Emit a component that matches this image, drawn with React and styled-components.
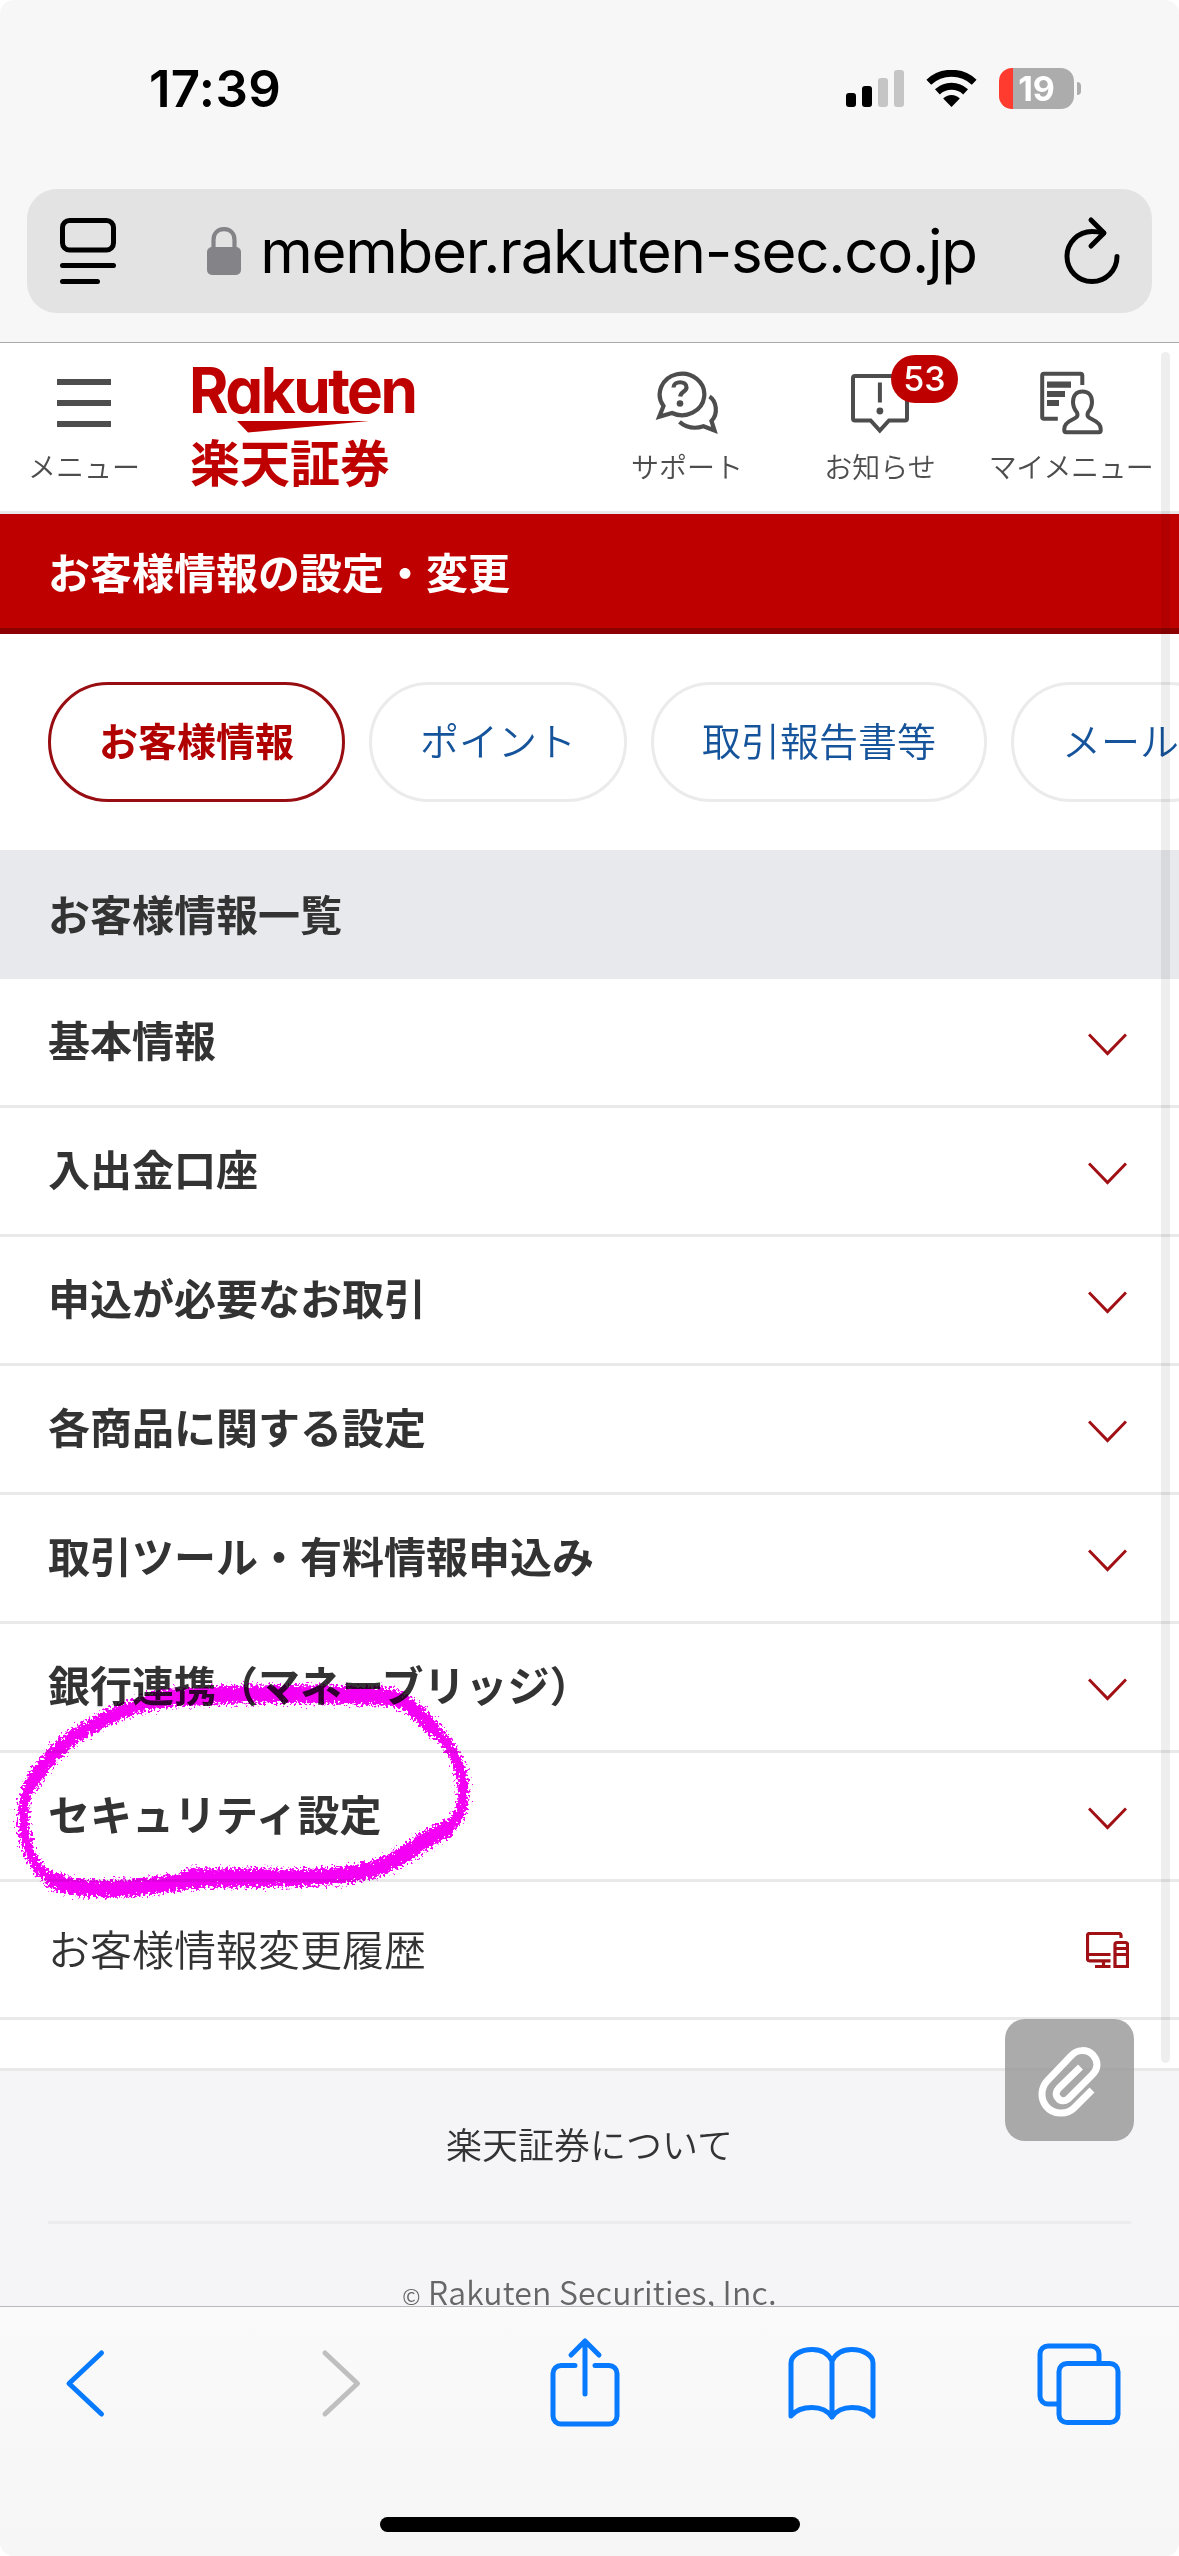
import React from "react";
import styled, { createGlobalStyle } from "styled-components";

const sections = [
    "基本情報",
    "入出金口座",
    "申込が必要なお取引",
    "各商品に関する設定",
    "取引ツール・有料情報申込み",
    "銀行連携（マネーブリッジ）",
    "セキュリティ設定",
];

const tabs = ["お客様情報", "ポイント", "取引報告書等", "メール"];

const App = () => (
    <Phone lang="ja">
        <GlobalStyle />
        <StatusBar>
            <Clock>17:39</Clock>
            <StatusIcons>
                <SignalIcon />
                <WifiIcon />
                <Battery>
                    <BatteryLevel>19</BatteryLevel>
                    <BatteryNub />
                </Battery>
            </StatusIcons>
        </StatusBar>
        <AddressArea>
            <AddressBar>
                <ReaderIcon />
                <Address>
                    <LockIcon />
                    <Url>member.rakuten-sec.co.jp</Url>
                </Address>
                <ReloadIcon />
            </AddressBar>
        </AddressArea>

        <WebView>
            <Header>
                <HeaderItem $width={112}>
                    <MenuIcon />
                    <HeaderLabel>メニュー</HeaderLabel>
                </HeaderItem>
                <Logo>
                    <LogoName>Rakuten</LogoName>
                    <LogoSwoosh viewBox="0 0 132 12">
                        <path d="M0 0H132L11 11.5Z" fill="#bf0000" />
                    </LogoSwoosh>
                    <LogoCompany>楽天証券</LogoCompany>
                </Logo>
                <HeaderActions>
                    <HeaderItem $width={112}>
                        <SupportIcon />
                        <HeaderLabel>サポート</HeaderLabel>
                    </HeaderItem>
                    <HeaderItem $width={112} $before={81}>
                        <NoticeIcon />
                        <Badge>53</Badge>
                        <HeaderLabel>お知らせ</HeaderLabel>
                    </HeaderItem>
                    <HeaderItem $width={168} $before={51}>
                        <MyMenuIcon />
                        <HeaderLabel $tight>マイメニュー</HeaderLabel>
                    </HeaderItem>
                </HeaderActions>
            </Header>

            <PageTitle>お客様情報の設定・変更</PageTitle>

            <Tabs>
                {tabs.map((tab, index) => (
                    <Tab key={tab} $active={index === 0}>
                        {tab}
                    </Tab>
                ))}
            </Tabs>

            <SectionTitle>お客様情報一覧</SectionTitle>
            <List>
                {sections.map(section => (
                    <Row key={section}>
                        <RowLabel>{section}</RowLabel>
                        <ChevronDown />
                    </Row>
                ))}
                <HistoryRow>
                    <RowLabel>お客様情報変更履歴</RowLabel>
                    <DevicesIcon />
                </HistoryRow>
                <Marker />
            </List>

            <Footer>
                <FooterLink>楽天証券について</FooterLink>
                <Copyright>
                    <small>©</small> Rakuten Securities, Inc.
                </Copyright>
            </Footer>

            <AttachButton>
                <ClipIcon />
            </AttachButton>
            <Scrollbar />
        </WebView>

        <Toolbar>
            <ToolbarIcons>
                <ToolIcon>
                    <path d="M54.5 15L22 45.500L54.500 76" />
                </ToolIcon>
                <ToolIcon $disabled>
                    <path d="M31 15L63.500 45.500L31 76" />
                </ToolIcon>
                <ToolIcon>
                    <path d="M34 27.500H20a8 8 0 0 0-8 8V78a8 8 0 0 0 8 8H68a8 8 0 0 0 8-8V35.500a8 8 0 0 0-8-8H54" />
                    <path d="M44 56V4M30 17L44 3L58 17" />
                </ToolIcon>
                <ToolIcon>
                    <path d="M44 23C40 15 33 11.500 24.500 11.500C13 11.500 3 17 3 25V78C7 73 14 69.500 24 69.500C33 69.500 40 73 44 79C48 73 55 69.500 64 69.500C74 69.500 81 73 85 78V25C85 17 75 11.500 63.500 11.500C55 11.500 48 15 44 23ZM44 23V79" />
                </ToolIcon>
                <ToolIcon>
                    <path d="M64 24V16a8 8 0 0 0-8-8H13a8 8 0 0 0-8 8V58a8 8 0 0 0 8 8h9" />
                    <rect x="24" y="25.500" width="59" height="59" rx="8" />
                </ToolIcon>
            </ToolbarIcons>
            <HomeIndicator />
        </Toolbar>
    </Phone>
);

const SignalIcon = () => (
    <svg width="58" height="37" viewBox="0 0 58 37">
        <rect x="0" y="23" width="10" height="14" rx="3" />
        <rect x="16" y="16" width="10" height="21" rx="3" />
        <rect x="32" y="8" width="10" height="29" rx="3" fill="#c5c5c5" />
        <rect x="48" y="0" width="10" height="37" rx="3" fill="#c5c5c5" />
    </svg>
);

const WifiIcon = () => (
    <svg width="51" height="37" viewBox="0 0 51 37" fill="none" stroke="#000" strokeWidth="7">
        <path d="M2.800 12.200A33.300 33.300 0 0 1 48.200 12.200" />
        <path d="M11.400 21.900A20.500 20.500 0 0 1 39.600 21.900" />
        <path d="M25.500 37L17.200 28.500A11.500 11.500 0 0 1 33.800 28.500Z" fill="#000" stroke="none" />
    </svg>
);

const ReaderIcon = () => (
    <svg width="56" height="67" viewBox="0 0 56 67" fill="none" stroke="#000" strokeWidth="5">
        <rect x="2.500" y="2.500" width="51" height="29.500" rx="7" />
        <path d="M2.500 47.500H53.500M2.500 63.500H37.500" strokeLinecap="round" />
    </svg>
);

const LockIcon = () => (
    <svg width="34" height="49" viewBox="0 0 34 49">
        <rect x="0" y="20" width="34" height="28" rx="5" fill="#838388" />
        <path d="M6.500 22V13C6.500 6 11 2.200 17 2.200S27.500 6 27.500 13V22" fill="none" stroke="#838388" strokeWidth="4.200" />
    </svg>
);

const ReloadIcon = () => (
    <svg width="60" height="72" viewBox="0 0 60 72" fill="none" stroke="#000" strokeWidth="5" strokeLinecap="round" strokeLinejoin="round">
        <path d="M56 41.500A25 25 0 1 1 31 16.500Q37 16.500 42.500 18" />
        <path d="M30 5L43 18L30 31" />
    </svg>
);

const MenuIcon = () => (
    <svg width="54" height="64" viewBox="0 0 54 64" fill="#4d4d4d">
        <path d="M0 8H54V14H0ZM0 29H54V35H0ZM0 50H54V56H0Z" />
    </svg>
);

const SupportIcon = () => (
    <svg width="65" height="64" viewBox="0 0 65 64" fill="none" stroke="#4d4d4d" strokeWidth="4.200">
        <path d="M8.500 35A22.300 20.800 0 1 1 17 42L4.200 45.800Z" />
        <path d="M54.500 25.500C61.500 30 63.500 43 56.500 50L59.500 59.500L48.500 55.300C40 58 31 56.500 24.500 50.800" />
        <path d="M18.500 16.500C18.800 9.500 31.500 9.500 31.500 16.500C31.500 21 25.800 20 25.200 25.500" />
        <circle cx="25" cy="32.500" r="3.300" fill="#4d4d4d" stroke="none" />
    </svg>
);

const NoticeIcon = () => (
    <svg width="58" height="64" viewBox="0 0 58 64" fill="none" stroke="#4d4d4d" strokeWidth="4">
        <path d="M4 5H54Q56 5 56 7V47.500Q56 49.500 54 49.500H38L28.800 59.500L19.600 49.500H4Q2 49.500 2 47.500V7Q2 5 4 5Z" />
        <path d="M28.900 11.500V31.500" />
        <circle cx="28.900" cy="40" r="3.400" fill="#4d4d4d" stroke="none" />
    </svg>
);

const MyMenuIcon = () => (
    <svg width="65" height="64" viewBox="0 0 65 64" fill="none" stroke="#4d4d4d" strokeWidth="4">
        <path d="M43.300 14V4.500Q43.300 2.700 41.500 2.700H5Q3.200 2.700 3.200 4.500V46Q3.200 47.800 5 47.800H18.800" />
        <path d="M8 13.700H32M8 23H26M8 32H20" strokeWidth="6.200" />
        <path d="M43.500 20.600C37 20.600 34 25 34 31C34 35.500 35.500 38.500 38 41.500C39.500 45.500 37.500 46.700 33.500 48.500C27.500 51.300 25.300 54 25.300 58V59.500Q25.300 61.200 27 61.200H60Q61.700 61.200 61.700 59.500V58C61.700 54 59.500 51.300 53.500 48.500C49.500 46.700 47.500 45.500 49 41.500C51.500 38.500 53 35.500 53 31C53 25 50 20.600 43.500 20.600Z" />
    </svg>
);

const ChevronDown = () => (
    <svg width="39" height="23" viewBox="0 0 39 23" fill="none" stroke="#a01014" strokeWidth="3">
        <path d="M1 1.500L19.500 20.500L38 1.500" />
    </svg>
);

const DevicesIcon = () => (
    <svg width="43" height="37" viewBox="0 0 43 37" fill="none" stroke="#a01014" strokeWidth="3.200">
        <path d="M35 6V3.500Q35 1.500 33 1.500H3.500Q1.500 1.500 1.500 3.500V27Q1.500 28.800 3.500 28.800H24.500M1.500 22.500H24.500M17.500 29V34M9 34.500H24.500" />
        <path d="M29 34.500V12.500Q29 10.500 31 10.500H39.500Q41.500 10.500 41.500 12.500V34.500ZM29 16.500H41.500M29 22.500H41.500" />
    </svg>
);

const ClipIcon = () => (
    <svg width="70" height="76" viewBox="0 0 70 76" fill="none" stroke="#fff" strokeWidth="7">
        <path d="M57 46L39 64C32 71 18 71 11 62C5 54 6 44 12 37L36 12C42 5 52 5 58 11C64 18 63 25 57 31L33 55C29 58 25 57 23 54C20 51 21 47 24 44L45.500 23" />
    </svg>
);

// Crayon loop drawn over the security row
const Marker = () => (
    <MarkerSvg viewBox="0 0 480 240">
        <filter id="crayon" x="-5%" y="-10%" width="110%" height="120%">
            <feTurbulence type="fractalNoise" baseFrequency="0.4" numOctaves="3" seed="4" result="noise" />
            <feDisplacementMap in="SourceGraphic" in2="noise" scale="15" xChannelSelector="R" yChannelSelector="G" />
        </filter>
        <g filter="url(#crayon)" fill="none" stroke="#f400f4" strokeLinecap="round" strokeLinejoin="round">
            <path
                strokeWidth="11"
                d="M25 122C36 98 60 70 93 53C122 36 150 28 185 26C250 22 320 22 380 25C404 28 419 42 435 60C456 82 463 100 462 125C461 149 450 155 430 166C410 176 395 195 365 200C330 208 280 207 230 207C190 206 150 218 120 217C85 219 55 217 38 198C25 182 18 150 25 122Z"
            />
            <path strokeWidth="15" d="M30 113C50 80 75 62 93 54C122 37 150 28 185 26C250 22 320 22 390 26C405 30 419 42 432 58" />
            <path strokeWidth="18" d="M150 30C165 27 175 26 185 26C250 22 320 22 390 26" />
            <path strokeWidth="17" d="M445 158C415 172 395 195 365 200C330 208 280 207 230 207C190 206 150 218 120 217C95 219 70 218 52 209" />
            <path strokeWidth="19" d="M188 207C210 206 240 208 268 206" />
        </g>
    </MarkerSvg>
);

const GlobalStyle = createGlobalStyle`
  * {
    box-sizing: border-box;
  }

  body {
    margin: 0;
    background: #fff;
  }

  svg {
    display: block;
    flex: none;
  }
`;

const Phone = styled.div`
  display: flex;
  flex-direction: column;
  width: 1179px;
  height: 2556px;
  overflow: hidden;
  border-radius: 14px;
  background: #f7f7f7;
  color: #333;
  font-family: "Noto Sans CJK JP", sans-serif;
`;

const StatusBar = styled.div`
  display: flex;
  justify-content: space-between;
  align-items: center;
  height: 176px;
  padding: 0 98px 0 149px;
  color: #000;
  font-family: Inter, sans-serif;
`;

const Clock = styled.div`
  font-size: 51px;
  font-weight: 600;
  letter-spacing: 0.3px;
`;

const StatusIcons = styled.div`
  display: flex;
  align-items: center;
  gap: 22px;
`;

const Battery = styled.div`
  display: flex;
  align-items: center;
`;

const BatteryLevel = styled.div`
  width: 75px;
  height: 41px;
  border-radius: 13px;
  background: linear-gradient(90deg, #ff3b30 14px, #acacac 14px);
  color: #fff;
  font-size: 34px;
  font-weight: 700;
  line-height: 41px;
  text-align: center;
`;

const BatteryNub = styled.div`
  width: 4px;
  height: 13px;
  margin-left: 3px;
  border-radius: 0 6px 6px 0;
  background: #acacac;
`;

const AddressArea = styled.div`
  height: 167px;
  padding: 13px 27px 0;
  border-bottom: 1px solid #a9a9ab;
`;

const AddressBar = styled.div`
  display: flex;
  align-items: center;
  justify-content: space-between;
  height: 124px;
  padding: 0 31px 0 33px;
  border-radius: 30px;
  background: #e3e3e3;
`;

const Address = styled.div`
  display: flex;
  align-items: center;
  gap: 19px;
  margin-left: 7px;
`;

const Url = styled.div`
  color: #000;
  font-family: Inter, sans-serif;
  font-size: 60px;
  line-height: 72px;
  letter-spacing: -1.25px;
`;

const WebView = styled.main`
  position: relative;
  flex: 1;
  overflow: hidden;
  background: #fff;
`;

const Header = styled.header`
  display: flex;
  height: 171px;
  padding: 0 24px 0 28px;
  border-bottom: 3px solid #e9e9e9;
`;

const HeaderItem = styled.div`
  position: relative;
  display: flex;
  flex-direction: column;
  align-items: center;
  width: ${props => props.$width}px;
  margin-left: ${props => props.$before || 0}px;
  padding-top: 28px;
`;

const HeaderLabel = styled.span`
  margin-top: 11px;
  color: #4d4d4d;
  font-size: 28px;
  font-weight: 350;
  line-height: 40px;
  letter-spacing: ${props => (props.$tight ? -0.6 : 0)}px;
  white-space: nowrap;
`;

const HeaderActions = styled.div`
  display: flex;
  margin-left: auto;
`;

const Badge = styled.span`
  position: absolute;
  top: 12px;
  left: 67px;
  width: 67px;
  height: 48px;
  border-radius: 24px;
  background: #bf0000;
  color: #fff;
  font-family: Inter, sans-serif;
  font-size: 34px;
  font-weight: 500;
  line-height: 48px;
  text-align: center;
`;

const Logo = styled.div`
  margin-left: 50px;
  padding-top: 18px;
  color: #bf0000;
`;

const LogoName = styled.div`
  margin-left: -1px;
  font-family: Inter, sans-serif;
  font-size: 63px;
  font-weight: 700;
  line-height: 58px;
  letter-spacing: -2.6px;
  font-feature-settings: "cv11";
  transform: scaleX(0.955);
  transform-origin: left;
`;

const LogoSwoosh = styled.svg`
  width: 132px;
  height: 12px;
  margin: 2px 0 0 47px;
`;

const LogoCompany = styled.div`
  font-size: 50px;
  font-weight: 700;
  line-height: 54px;
`;

const PageTitle = styled.h1`
  height: 120px;
  margin: 0;
  padding-left: 48px;
  border-bottom: 6px solid #8c0000;
  background: #bf0000;
  color: #fff;
  font-size: 42px;
  font-weight: 700;
  line-height: 113px;
`;

const Tabs = styled.nav`
  display: flex;
  gap: 24px;
  height: 216px;
  padding: 48px;
`;

const Tab = styled.a`
  flex: none;
  height: 120px;
  padding: 0 48px;
  border: 3px solid ${props => (props.$active ? "#980d12" : "#ebebeb")};
  border-radius: 60px;
  color: ${props => (props.$active ? "#b00000" : "#15539b")};
  font-size: 39px;
  font-weight: ${props => (props.$active ? 700 : 350)};
  line-height: 109px;
`;

const SectionTitle = styled.h2`
  height: 129px;
  margin: 0;
  padding-left: 48px;
  background: #e8e9ed;
  font-size: 42px;
  font-weight: 700;
  line-height: 126px;
`;

const List = styled.div`
  position: relative;
  padding-bottom: 48px;
`;

const Row = styled.div`
  display: flex;
  align-items: center;
  justify-content: space-between;
  height: 129px;
  padding: 4px 52px 0 48px;
  border-bottom: 3px solid #e9e9e9;
  font-size: 42px;
  font-weight: 700;
  line-height: 60px;
`;

const RowLabel = styled.span`
  margin-bottom: 10px;
`;

const HistoryRow = styled(Row)`
  height: 138px;
  padding: 1px 50px 0 48px;
  font-weight: 350;

  ${RowLabel} {
    margin-bottom: 5px;
  }
`;

const MarkerSvg = styled.svg`
  position: absolute;
  left: 1px;
  top: 692px;
  width: 480px;
  height: 240px;
  mix-blend-mode: multiply;
`;

const Footer = styled.footer`
  height: 300px;
  padding: 0 48px;
  border-top: 3px solid #e9e9e9;
  background: #f5f5f8;
  text-align: center;
`;

const FooterLink = styled.div`
  height: 153px;
  border-bottom: 3px solid #ececee;
  font-size: 36px;
  font-weight: 350;
  line-height: 144px;
`;

const Copyright = styled.div`
  margin-top: 43px;
  color: #666;
  font-size: 32px;
  font-weight: 350;
  line-height: 48px;
  letter-spacing: 0.2px;

  small {
    font-size: 22px;
  }
`;

const AttachButton = styled.button`
  position: absolute;
  right: 45px;
  bottom: 165px;
  display: flex;
  align-items: center;
  justify-content: center;
  width: 129px;
  height: 122px;
  padding: 4px 0 0;
  border: 0;
  border-radius: 20px;
  background: rgba(153, 153, 153, 0.82);
`;

const Scrollbar = styled.div`
  position: absolute;
  top: 9px;
  right: 9px;
  width: 9px;
  height: 1711px;
  border-radius: 5px;
  background: rgba(0, 0, 0, 0.065);
`;

const Toolbar = styled.div`
  display: flex;
  flex-direction: column;
  align-items: center;
  justify-content: space-between;
  height: 250px;
  padding: 31px 0 24px;
  border-top: 1px solid #b8b8ba;
  background: linear-gradient(#fafafa, #f6f6f6);
`;

const ToolbarIcons = styled.div`
  display: flex;
  justify-content: space-between;
  width: 100%;
  padding: 0 56px 0 47px;
`;

const ToolIcon = styled.svg.attrs(() => ({ viewBox: "0 0 88 88" }))`
  width: 88px;
  height: 88px;
  overflow: visible;
  fill: none;
  stroke: ${props => (props.$disabled ? "#bfbfbf" : "#077aff")};
  stroke-width: 5px;
  stroke-linecap: round;
  stroke-linejoin: round;
`;

const HomeIndicator = styled.div`
  width: 420px;
  height: 15px;
  border-radius: 8px;
  background: #000;
`;

export default App;
